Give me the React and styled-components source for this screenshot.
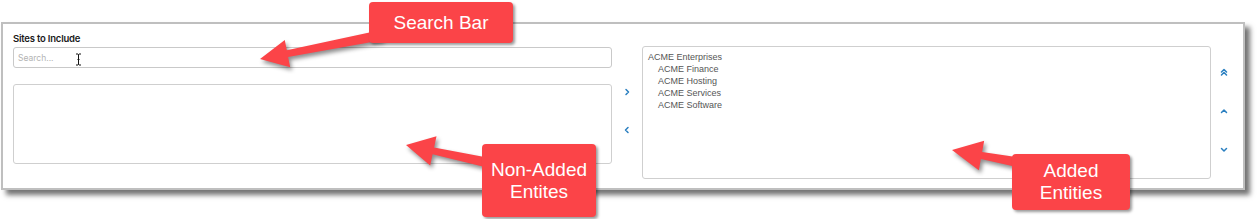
import React from 'react';
import styled, { createGlobalStyle } from 'styled-components';

const RED = '#fb4448';
const BLUE = '#2a7fc0';

const GlobalStyle = createGlobalStyle`
  html, body {
    margin: 0;
    padding: 0;
    background: #ffffff;
    overflow: hidden;
  }
`;

const Stage = styled('div')`
  position: relative;
  width: 1259px;
  height: 219px;
  box-sizing: border-box;
  padding: 22px 0 0 1px;
  overflow: hidden;
  background: #ffffff;
`;

const Panel = styled('div')`
  width: 1244px;
  height: 168px;
  box-sizing: border-box;
  border: 2px solid #bfbfbf;
  background: #ffffff;
  box-shadow: 5px 5px 5px rgba(0, 0, 0, 0.55);
  display: flex;
  align-items: flex-start;
  padding-left: 10px;
`;

const LeftCol = styled('div')`
  width: 599px;
  padding-top: 9px;
  display: flex;
  flex-direction: column;
`;

const Label = styled('div')`
  font-family: Inter, 'Liberation Sans', sans-serif;
  font-size: 9.5px;
  font-weight: 600;
  line-height: 11px;
  letter-spacing: -0.2px;
  color: #1a1a1a;
  margin-bottom: 3px;
`;

const SearchBox = styled('div')`
  position: relative;
  height: 21px;
  box-sizing: border-box;
  border: 1px solid #c9c9c9;
  border-radius: 3px;
  display: flex;
  align-items: center;
  padding-left: 4px;
  font-family: Inter, 'Liberation Sans', sans-serif;
  font-size: 8.5px;
  color: #b3b3b3;
`;

const Cursor = styled('svg')`
  position: absolute;
  left: 61px;
  top: 5px;
`;

const ListBox = styled('div')`
  box-sizing: border-box;
  border: 1px solid #cfcfcf;
  border-radius: 3px;
  background: #ffffff;
  margin-top: ${({ $top }) => $top || 0}px;
  width: ${({ $w }) => $w}px;
  height: ${({ $h }) => $h}px;
  padding: 4px 5px;
`;

const ArrowCol = styled('div')`
  width: ${({ $w }) => $w}px;
  padding-top: ${({ $top }) => $top}px;
  display: flex;
  flex-direction: column;
  align-items: center;
  gap: ${({ $gap }) => $gap}px;
`;

const Item = styled('div')`
  font-family: 'Liberation Sans', Arial, sans-serif;
  font-size: 9px;
  line-height: 12px;
  color: #555555;
  padding-left: ${({ $child }) => ($child ? 10 : 0)}px;
  white-space: nowrap;
`;

const Arrows = styled('svg')`
  position: absolute;
  left: 0;
  top: 0;
  pointer-events: none;
  filter: drop-shadow(2px 3px 2px rgba(0, 0, 0, 0.45));
`;

const Callout = styled('div')`
  position: absolute;
  left: ${({ $x }) => $x}px;
  top: ${({ $y }) => $y}px;
  width: ${({ $w }) => $w}px;
  height: ${({ $h }) => $h}px;
  background: ${RED};
  border-radius: 4px;
  box-shadow: 2px 2px 3px rgba(0, 0, 0, 0.4);
  display: flex;
  align-items: center;
  justify-content: center;
  text-align: center;
  font-family: 'Liberation Sans', Arial, sans-serif;
  font-size: 19px;
  line-height: 22px;
  color: #ffffff;
`;

const Chevron = ({ d }) => (
  <svg width="8" height="8" viewBox="0 0 8 8">
    <path d={d} fill="none" stroke={BLUE} strokeWidth="1.5" strokeLinecap="round" strokeLinejoin="round" />
  </svg>
);

const arrowPoints = (sx, sy, tx, ty, tail, neck, headLen, headHalf) => {
  const dx = tx - sx;
  const dy = ty - sy;
  const len = Math.hypot(dx, dy);
  const ux = dx / len;
  const uy = dy / len;
  const px = -uy;
  const py = ux;
  const bx = tx - ux * headLen;
  const by = ty - uy * headLen;
  const pts = [
    [sx + (px * tail) / 2, sy + (py * tail) / 2],
    [bx + (px * neck) / 2, by + (py * neck) / 2],
    [bx + px * headHalf, by + py * headHalf],
    [tx, ty],
    [bx - px * headHalf, by - py * headHalf],
    [bx - (px * neck) / 2, by - (py * neck) / 2],
    [sx - (px * tail) / 2, sy - (py * tail) / 2],
  ];
  return pts.map((p) => p.map((v) => v.toFixed(1)).join(',')).join(' ');
};

const items = ['ACME Finance', 'ACME Hosting', 'ACME Services', 'ACME Software'];

const App = () => (
  <>
    <GlobalStyle />
    <Stage>
      <Panel>
        <LeftCol>
          <Label>Sites to Include</Label>
          <SearchBox>
            Search...
            <Cursor width="7" height="13" viewBox="0 0 7 13">
              <path d="M1 1h2l0.5 0.5L4 1h2M3.5 1.5v10M1 12h2l0.5-0.5L4 12h2M2.5 6.5h2" fill="none" stroke="#111" strokeWidth="1" />
            </Cursor>
          </SearchBox>
          <ListBox $top={16} $w={599} $h={80} />
        </LeftCol>
        <ArrowCol $w={30} $top={64} $gap={30}>
          <Chevron d="M3 1.5l2.5 2.5L3 6.5" />
          <Chevron d="M5 1.5L2.5 4L5 6.5" />
        </ArrowCol>
        <ListBox $top={22} $w={569} $h={133}>
          <Item>ACME Enterprises</Item>
          {items.map((name) => (
            <Item key={name} $child>
              {name}
            </Item>
          ))}
        </ListBox>
        <ArrowCol $w={26} $top={44} $gap={31}>
          <Chevron d="M1.5 4L4 1.5L6.5 4M1.5 7L4 4.5L6.5 7" />
          <Chevron d="M1.5 5.5L4 3L6.5 5.5" />
          <Chevron d="M1.5 2.5L4 5L6.5 2.5" />
        </ArrowCol>
      </Panel>

      <Arrows width="1259" height="219" viewBox="0 0 1259 219">
        <polygon fill={RED} points={arrowPoints(382, 35, 260, 59, 10, 7, 28, 14)} />
        <polygon fill={RED} points={arrowPoints(494, 164, 406, 145, 10, 7, 28, 15)} />
        <polygon fill={RED} points={arrowPoints(1022, 163, 952, 150, 10, 7, 30, 15)} />
      </Arrows>

      <Callout $x={369} $y={2} $w={144} $h={41}>Search Bar</Callout>
      <Callout $x={482} $y={144} $w={114} $h={73}>
        Non-Added
        <br />
        Entites
      </Callout>
      <Callout $x={1012} $y={154} $w={118} $h={56}>
        Added
        <br />
        Entities
      </Callout>
    </Stage>
  </>
);

export default App;
